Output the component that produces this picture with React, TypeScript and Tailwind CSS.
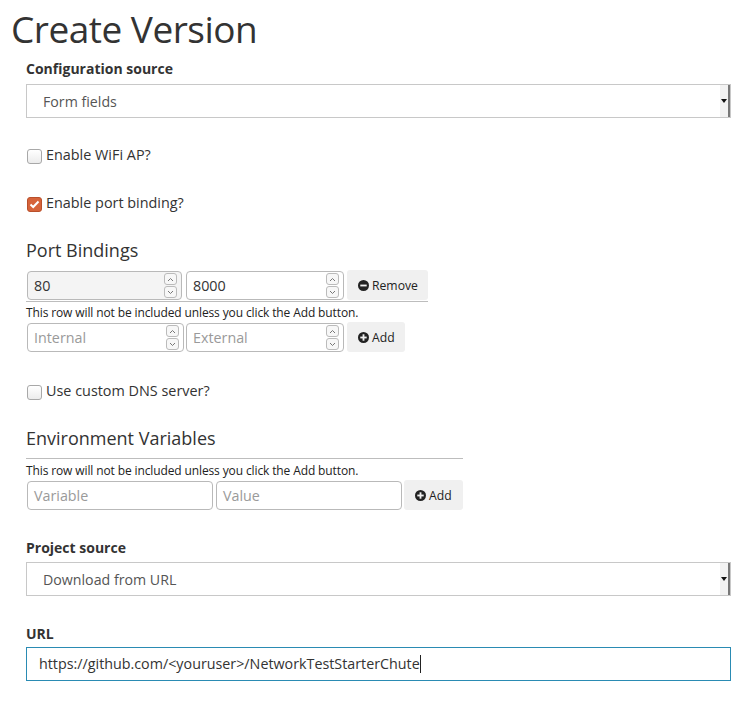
import React from "react";

function Spin() {
  return (
    <div className="absolute right-[4px] top-[1px] flex flex-col gap-[1px]">
      <div className="w-[13px] h-[12px] border border-[#bbb] rounded-[3px] bg-[#f7f7f7] flex items-center justify-center">
        <svg width="7" height="5" viewBox="0 0 7 5">
          <path d="M1 4 L3.5 1.5 L6 4" stroke="#777" fill="none" strokeWidth="1" />
        </svg>
      </div>
      <div className="w-[13px] h-[12px] border border-[#bbb] rounded-[3px] bg-[#f7f7f7] flex items-center justify-center">
        <svg width="7" height="5" viewBox="0 0 7 5">
          <path d="M1 1 L3.5 3.5 L6 1" stroke="#777" fill="none" strokeWidth="1" />
        </svg>
      </div>
    </div>
  );
}

function NumInput({ value, placeholder, w, gray }: { value?: string; placeholder?: string; w: string; gray?: boolean }) {
  return (
    <div
      className={`relative h-[29px] ${w} border border-[#b9b9b9] rounded-[4px] ${gray ? "bg-[#f4f4f4]" : "bg-white"} flex items-center pl-[6px] text-[14.3px]`}
    >
      {value ? <span className="text-[#333]">{value}</span> : <span className="text-[#9a9a9a]">{placeholder}</span>}
      <Spin />
    </div>
  );
}

function TextInput({ placeholder, w }: { placeholder: string; w: string }) {
  return (
    <div className={`h-[29px] ${w} border border-[#b9b9b9] rounded-[4px] bg-white flex items-center pl-[6px] text-[14.3px] text-[#9a9a9a]`}>
      {placeholder}
    </div>
  );
}

function CircleIcon({ plus }: { plus?: boolean }) {
  return (
    <svg width="11" height="11" viewBox="0 0 12 12">
      <circle cx="6" cy="6" r="6" fill="#222" />
      <rect x="2.5" y="5" width="7" height="2" fill="#f0f0f0" />
      {plus && <rect x="5" y="2.5" width="2" height="7" fill="#f0f0f0" />}
    </svg>
  );
}

function Btn({ label, plus, w }: { label: string; plus?: boolean; w: string }) {
  return (
    <div className={`h-[30px] ${w} bg-[#f0f0f0] rounded-[3px] flex items-center pl-[11px] gap-[3px] text-[12.2px] text-[#222]`}>
      <CircleIcon plus={plus} />
      <span className="pt-[2px]">{label}</span>
    </div>
  );
}

function Select({ text }: { text: string }) {
  return (
    <div className="relative h-[34px] w-[705px] border border-[#c8c8c8] bg-white flex items-center pl-[16px] text-[14.2px] text-[#555]">
      <span className="pt-[1px]">{text}</span>
      <div className="absolute right-0 top-0 bottom-0 w-[10px] bg-[#f2f2f2] border-r-2 border-[#777] flex items-center justify-center">
        <svg width="6" height="4" viewBox="0 0 6 4">
          <path d="M0 0 L6 0 L3 4 Z" fill="#111" />
        </svg>
      </div>
    </div>
  );
}

function Checkbox({ checked, label }: { checked?: boolean; label: string }) {
  return (
    <div className="flex items-center h-[16px]">
      {checked ? (
        <div className="w-[15px] h-[15px] ml-[1px] rounded-[3px] bg-[#d6633a] border border-[#b9502b] flex items-center justify-center">
          <svg width="11" height="9" viewBox="0 0 11 9">
            <path d="M1.5 4.5 L4.2 7 L9.5 1.5" stroke="#fff" strokeWidth="2" fill="none" />
          </svg>
        </div>
      ) : (
        <div className="w-[15px] h-[15px] ml-[1px] rounded-[3px] border border-[#a8a8a8] bg-gradient-to-b from-white to-[#ececec]" />
      )}
      <span className="ml-[4px] text-[14.4px] text-[#333] leading-[16px] -mt-[3px]">{label}</span>
    </div>
  );
}

export default function App() {
  return (
    <div className="w-[749px] h-[705px] bg-white font-['Open_Sans',sans-serif] text-[#333]">
      <h1 className="pl-[11px] h-[58px] text-[37px] leading-[58px] font-normal tracking-[-0.5px] text-[#333]">
        Create Version
      </h1>
      <div className="pl-[26px] flex flex-col">
        <div className="h-[22px] leading-[22px] text-[14px] font-bold text-[#333]">Configuration source</div>
        <div className="mt-[4px]">
          <Select text="Form fields" />
        </div>
        <div className="mt-[30px]">
          <Checkbox label="Enable WiFi AP?" />
        </div>
        <div className="mt-[32px]">
          <Checkbox checked label="Enable port binding?" />
        </div>
        <div className="mt-[26px] h-[24px] leading-[24px] text-[18px] text-[#333]">Port Bindings</div>
        <div className="mt-[8px] flex items-end h-[30px]">
          <div className="ml-[1px]">
            <NumInput value="80" w="w-[155px]" gray />
          </div>
          <div className="ml-[4px]">
            <NumInput value="8000" w="w-[158px]" />
          </div>
          <div className="ml-[3px]">
            <Btn label="Remove" w="w-[81px]" />
          </div>
        </div>
        <div className="mt-[1px] h-[1px] w-[402px] bg-[#bdbdbd]" />
        <div className="h-[20px] leading-[22px] text-[12px] tracking-[-0.12px] text-[#222]">
          This row will not be included unless you click the Add button.
        </div>
        <div className="flex items-end h-[30px]">
          <div className="ml-[1px]">
            <NumInput placeholder="Internal" w="w-[157px]" />
          </div>
          <div className="ml-[2px]">
            <NumInput placeholder="External" w="w-[158px]" />
          </div>
          <div className="ml-[3px]">
            <Btn label="Add" plus w="w-[58px]" />
          </div>
        </div>
        <div className="mt-[32px]">
          <Checkbox label="Use custom DNS server?" />
        </div>
        <div className="mt-[26px] h-[24px] leading-[24px] text-[18px] text-[#333]">Environment Variables</div>
        <div className="mt-[8px] h-[1px] w-[437px] bg-[#bdbdbd]" />
        <div className="h-[21px] leading-[23px] text-[12px] tracking-[-0.12px] text-[#222]">
          This row will not be included unless you click the Add button.
        </div>
        <div className="flex items-end h-[30px]">
          <div className="ml-[1px]">
            <TextInput placeholder="Variable" w="w-[186px]" />
          </div>
          <div className="ml-[3px]">
            <TextInput placeholder="Value" w="w-[186px]" />
          </div>
          <div className="ml-[2px]">
            <Btn label="Add" plus w="w-[59px]" />
          </div>
        </div>
        <div className="mt-[27px] h-[22px] leading-[22px] text-[14px] font-bold text-[#333]">Project source</div>
        <div className="mt-[3px]">
          <Select text="Download from URL" />
        </div>
        <div className="mt-[27px] h-[22px] leading-[22px] text-[14px] font-bold text-[#333]">URL</div>
        <div className="mt-[2px] h-[34px] w-[705px] border border-[#2a8bb3] bg-white flex items-center pl-[12px] text-[14.3px] text-[#333]">
          <span>https://github.com/&lt;youruser&gt;/NetworkTestStarterChute</span>
          <span className="w-[1px] h-[18px] bg-[#222]" />
        </div>
      </div>
    </div>
  );
}
